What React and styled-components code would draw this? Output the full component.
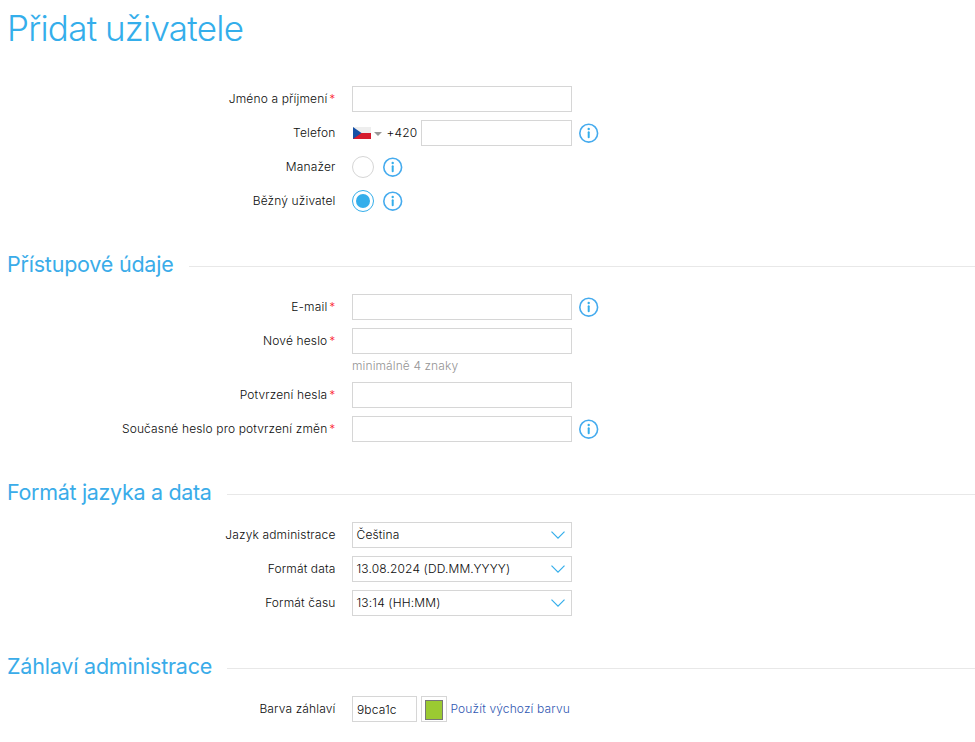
import React from 'react';
import styled, { createGlobalStyle } from 'styled-components';

const GlobalStyle = createGlobalStyle`
  * { box-sizing: border-box; }
  body {
    margin: 0;
    background: #fff;
    color: #0c0c0c;
    font: 365 12px/26px Inter, "Liberation Sans", sans-serif;
    letter-spacing: 0.14px;
  }
`;

const Page = styled.main`
  height: 742px;
  padding: 8px 0 0 8px;
  overflow: hidden;
`;

const Title = styled.h1`
  height: 40px;
  margin: 0 0 38px -1px;
  color: #34aeeb;
  font: 350 35px/41px Inter, "Liberation Sans", sans-serif;
  letter-spacing: -0.75px;
  word-spacing: -0.5px;
`;

const SectionHeading = styled.h2`
  display: flex;
  align-items: center;
  height: 30px;
  margin: 36px 0 14px -1px;
  color: #3aace9;
  font: 370 21.5px/27px Inter, "Liberation Sans", sans-serif;
  letter-spacing: ${(p) => p.$spacing || 0}px;
  white-space: nowrap;

  &::after {
    content: '';
    flex: 1;
    height: 1px;
    margin: 3px 0 0 15px;
    background: #e8e8e8;
  }
`;

const HeadingText = styled.span`
  padding-bottom: 2px;
`;

const Rows = styled.div`
  display: grid;
  gap: 8px;
`;

const Row = styled.div`
  display: grid;
  grid-template-columns: 327.5px 1fr;
  column-gap: 16.5px;
`;

const Label = styled.label`
  text-align: right;
  white-space: nowrap;
`;

const Required = styled.span`
  margin-left: 2px;
  color: #fb1c2c;
`;

const Controls = styled.div`
  display: flex;
  align-items: center;
  height: 26px;
`;

const Input = styled.input`
  width: ${(p) => p.$width || 220}px;
  height: 26px;
  padding: 1px 4px 0;
  border: 1px solid #d6d6d6;
  border-radius: 0;
  outline: none;
  background: #fff;
  color: #0c0c0c;
  font: inherit;
  letter-spacing: inherit;
`;

const SelectBox = styled.button`
  display: flex;
  align-items: center;
  justify-content: space-between;
  width: 220px;
  height: 26px;
  padding: 0 5px 0 3.5px;
  border: 1px solid #d6d6d6;
  background: #fff;
  color: #0c0c0c;
  font: inherit;
  line-height: 24px;
  letter-spacing: inherit;
`;

const Radio = styled.input`
  appearance: none;
  display: grid;
  place-items: center;
  width: 22px;
  height: 22px;
  margin: 0;
  border: 1px solid #d6d6d6;
  border-radius: 50%;
  background: #fff;

  &:checked {
    border-color: #34aeeb;
  }

  &:checked::before {
    content: '';
    width: 14px;
    height: 14px;
    border-radius: 50%;
    background: #34aeeb;
  }
`;

const Prefix = styled.div`
  display: flex;
  align-items: center;
  width: 69px;
  padding-left: 1px;
`;

const Caret = styled.span`
  margin: 1px 4.5px 0 3px;
  border: 4px solid transparent;
  border-top-color: #999;
  border-bottom: 0;
`;

const Hint = styled.div`
  height: 20px;
  color: #949494;
  line-height: 24px;
  letter-spacing: 0.1px;
`;

const Swatch = styled.div`
  width: 26px;
  height: 26px;
  margin: 0 3.5px 0 4px;
  padding: 3px;
  border: 1px solid #d6d6d6;

  &::before {
    content: '';
    display: block;
    height: 18px;
    border: 1px solid #777;
    background: #9bca32;
  }
`;

const ResetLink = styled.a`
  color: #2f57b2;
  text-decoration: none;
`;

const InfoSvg = styled.svg`
  flex: none;
  margin-left: ${(p) => p.$gap}px;
`;

function Info({ gap = 7 }) {
  return (
    <InfoSvg $gap={gap} width="20" height="20" viewBox="0 0 20 20">
      <circle cx="9.7" cy="10.2" r="8.9" fill="none" stroke="#45abee" strokeWidth="1.6" />
      <circle cx="9.7" cy="6" r="1.2" fill="#34aeeb" />
      <path d="M9.7 9.2v5" stroke="#34aeeb" strokeWidth="2" strokeLinecap="round" />
    </InfoSvg>
  );
}

function CzechFlag() {
  return (
    <svg width="18" height="12" viewBox="0 0 18 12">
      <path d="M0 0h18v6H0z" fill="#eee" />
      <path d="M0 6h18v6H0z" fill="#d61b2e" />
      <path d="M0 0l8.5 6L0 12z" fill="#1650a5" />
    </svg>
  );
}

function Select({ children }) {
  return (
    <SelectBox type="button">
      <span>{children}</span>
      <svg width="16" height="10" viewBox="0 0 16 10">
        <path d="M1.5 1.7L8 8.2l6.5-6.5" fill="none" stroke="#34aeeb" strokeWidth="1.2" />
      </svg>
    </SelectBox>
  );
}

function Section({ title, spacing, children }) {
  return (
    <section>
      <SectionHeading $spacing={spacing}>
        <HeadingText>{title}</HeadingText>
      </SectionHeading>
      <Rows>{children}</Rows>
    </section>
  );
}

function Field({ label, required, hint, children }) {
  return (
    <Row>
      <Label>
        {label}
        {required && <Required>*</Required>}
      </Label>
      <div>
        <Controls>{children}</Controls>
        {hint && <Hint>{hint}</Hint>}
      </div>
    </Row>
  );
}

export default function App() {
  return (
    <Page>
      <GlobalStyle />
      <Title>Přidat uživatele</Title>
      <Rows>
        <Field label="Jméno a příjmení" required>
          <Input />
        </Field>
        <Field label="Telefon">
          <Prefix>
            <CzechFlag />
            <Caret />
            +420
          </Prefix>
          <Input $width={151} />
          <Info />
        </Field>
        <Field label="Manažer">
          <Radio type="radio" name="role" />
          <Info gap={9} />
        </Field>
        <Field label="Běžný uživatel">
          <Radio type="radio" name="role" defaultChecked />
          <Info gap={9} />
        </Field>
      </Rows>

      <Section title="Přístupové údaje" spacing={-0.22}>
        <Field label="E-mail" required>
          <Input />
          <Info />
        </Field>
        <Field label="Nové heslo" required hint="minimálně 4 znaky">
          <Input type="password" />
        </Field>
        <Field label="Potvrzení hesla" required>
          <Input type="password" />
        </Field>
        <Field label="Současné heslo pro potvrzení změn" required>
          <Input type="password" />
          <Info />
        </Field>
      </Section>

      <Section title="Formát jazyka a data" spacing={-0.32}>
        <Field label="Jazyk administrace">
          <Select>Čeština</Select>
        </Field>
        <Field label="Formát data">
          <Select>13.08.2024 (DD.MM.YYYY)</Select>
        </Field>
        <Field label="Formát času">
          <Select>13:14 (HH:MM)</Select>
        </Field>
      </Section>

      <Section title="Záhlaví administrace" spacing={-0.2}>
        <Field label="Barva záhlaví">
          <Input $width={65} defaultValue="9bca1c" />
          <Swatch />
          <ResetLink href="#">Použít výchozí barvu</ResetLink>
        </Field>
      </Section>
    </Page>
  );
}
